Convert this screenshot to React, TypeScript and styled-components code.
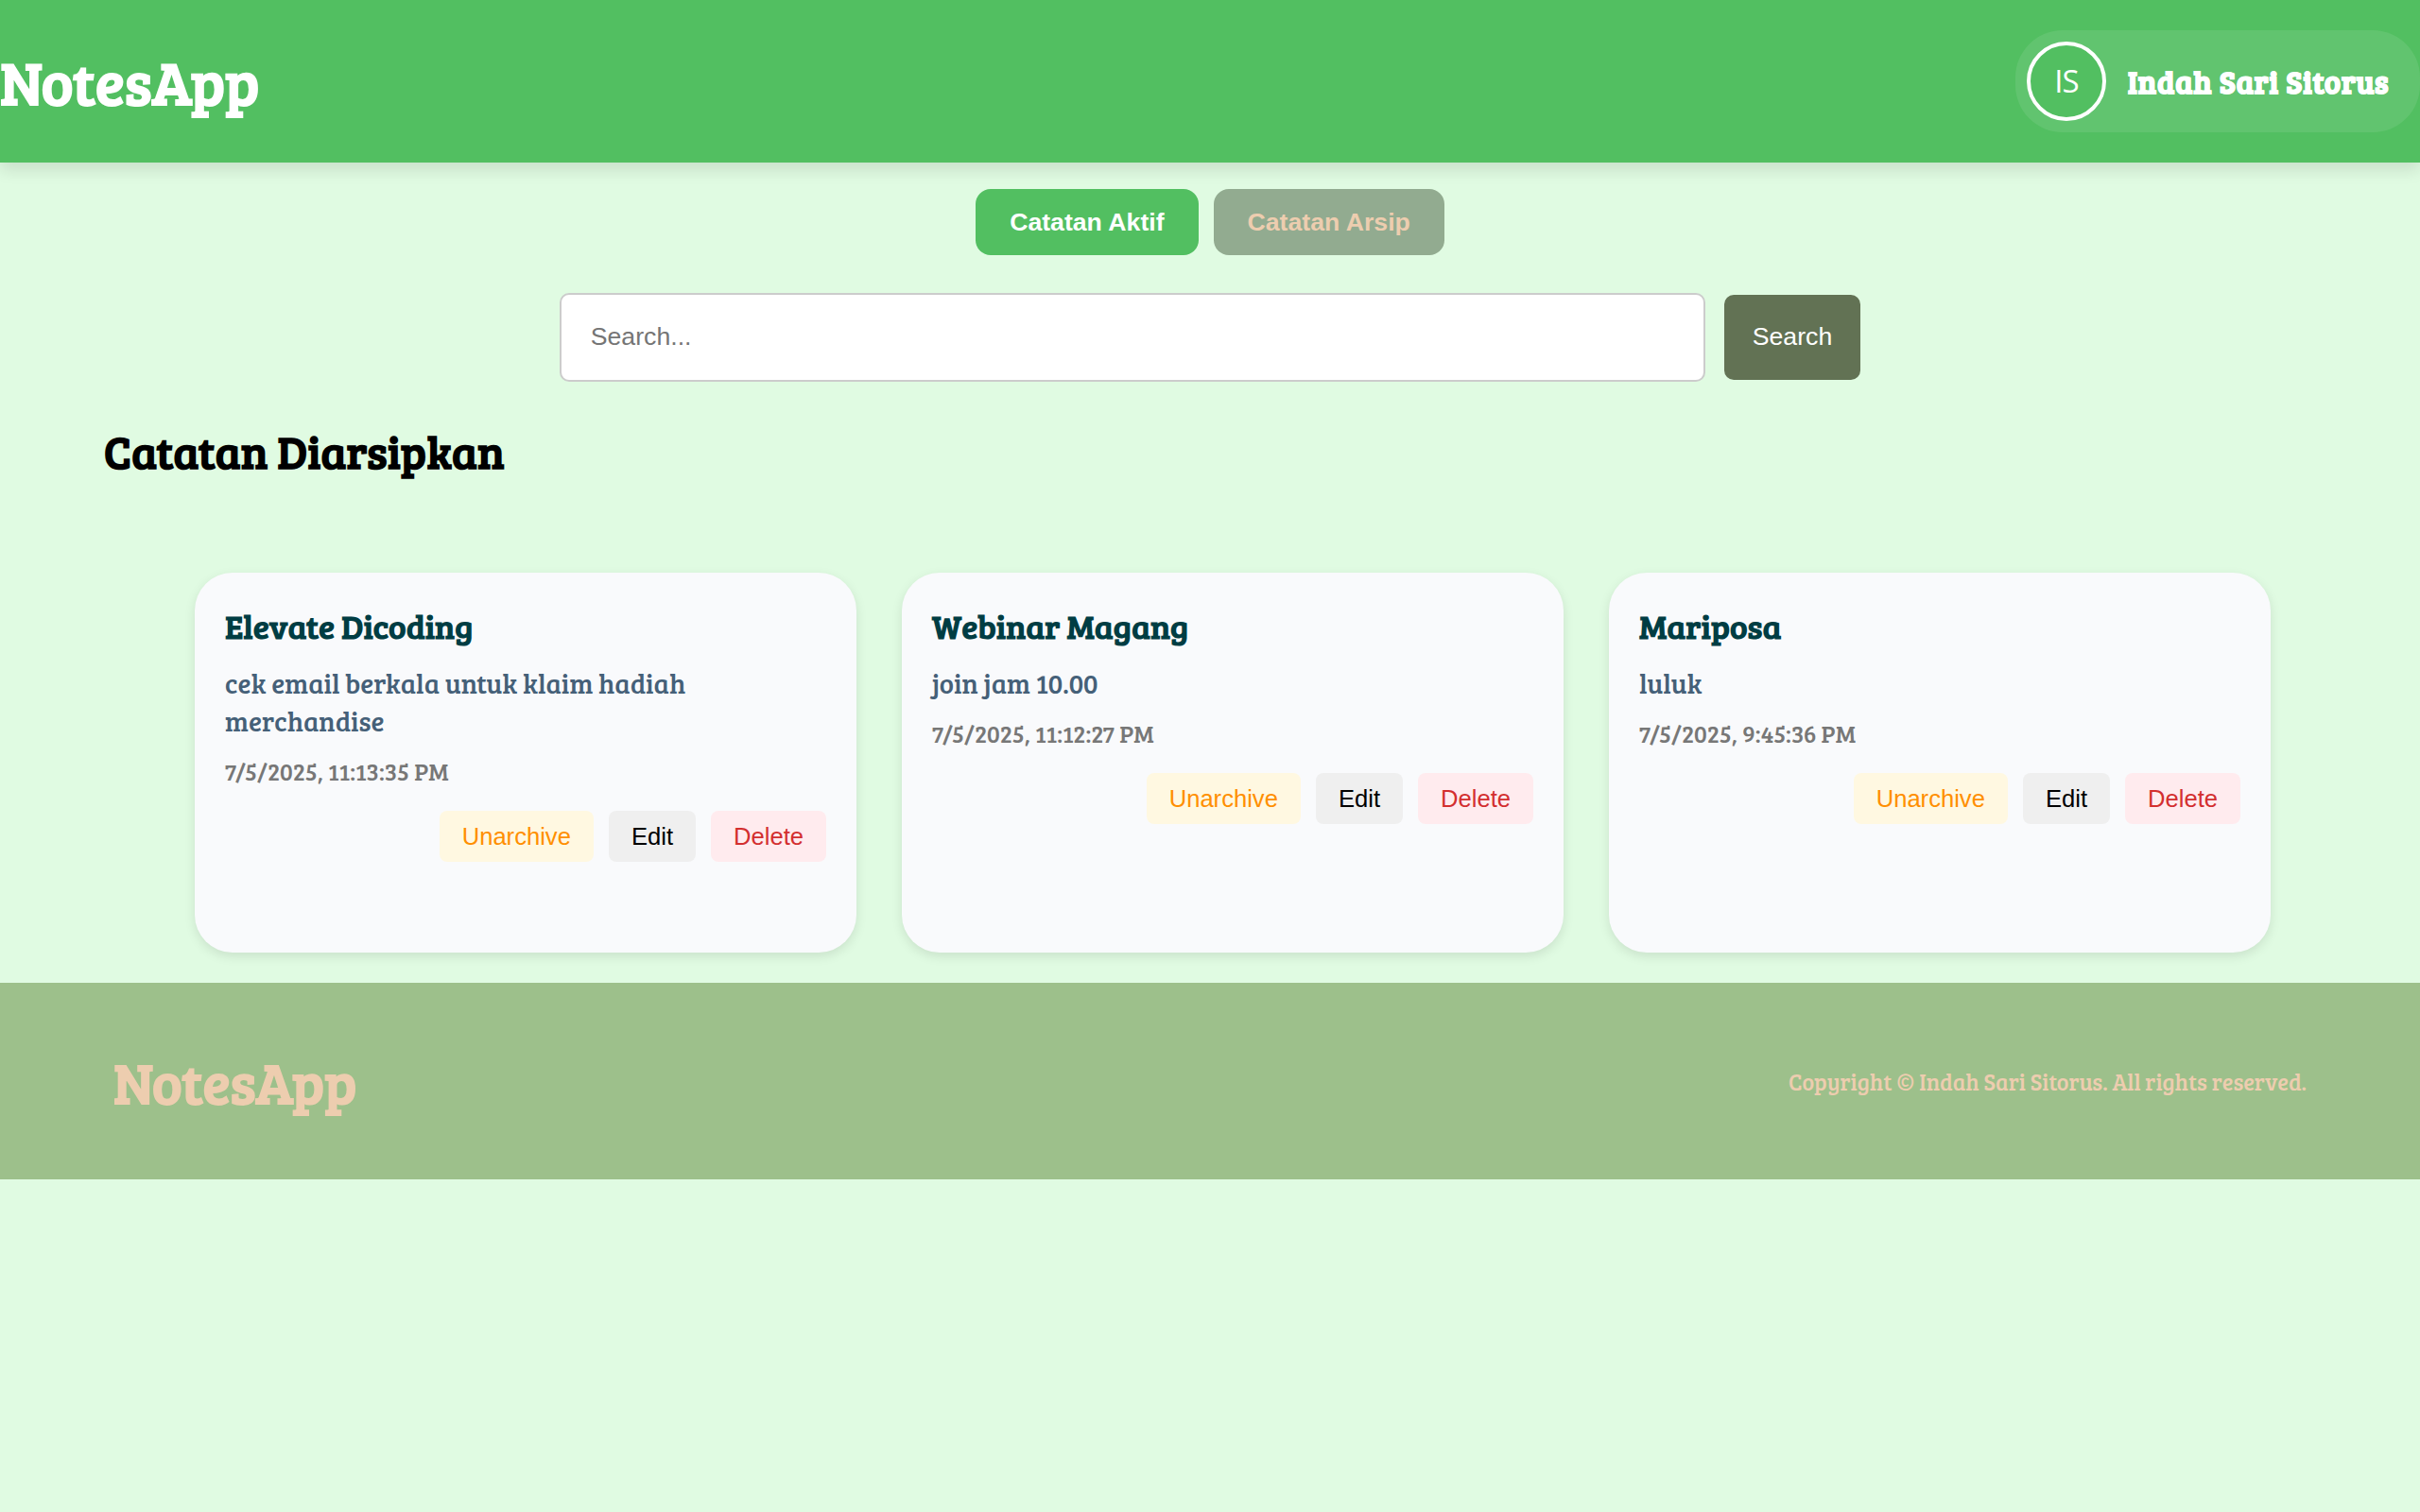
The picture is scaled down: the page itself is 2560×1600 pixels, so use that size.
import React from "react";
import styled, { createGlobalStyle } from "styled-components";

const slab = `"Bree Serif", "DejaVu Serif Condensed", "DejaVu Serif", serif`;
const sans = `Arial, "Liberation Sans", sans-serif`;

const GlobalStyle = createGlobalStyle`
  *, *::before, *::after { box-sizing: border-box; }
  body {
    margin: 0;
    min-height: 100vh;
    background: #e0fbe2;
    font-family: ${slab};
    color: #000;
  }
  h1, h2, h3, p { margin: 0; }
  button, input { font-family: ${sans}; }
`;

const Header = styled.header`
  display: flex;
  align-items: center;
  justify-content: space-between;
  height: 172px;
  background: #52bf61;
  color: #fff;
  box-shadow: 0 8px 16px rgba(0, 0, 0, 0.11);
`;

const Logo = styled.h1`
  font-size: 64px;
  line-height: 80px;
  white-space: nowrap;
`;

const Profile = styled.div`
  display: flex;
  align-items: center;
  gap: 23px;
  width: 428px;
  height: 108px;
  padding: 12px;
  border-radius: 50px;
  background: rgba(255, 255, 255, 0.09);
`;

const Avatar = styled.div`
  display: flex;
  align-items: center;
  justify-content: center;
  flex: none;
  width: 84px;
  height: 84px;
  padding-bottom: 1px;
  border: 4px solid #fff;
  border-radius: 50%;
  background: #52bf61;
  font: 400 33px "Open Sans", sans-serif;
  letter-spacing: -1px;
`;

const ProfileName = styled.span`
  padding-top: 2px;
  font-size: 32px;
  font-weight: bold;
  line-height: 40px;
  letter-spacing: 1px;
  white-space: nowrap;
  -webkit-text-stroke: 0.9px currentColor;
`;

const Tabs = styled.nav`
  display: flex;
  justify-content: center;
  gap: 16px;
  padding-top: 28px;
`;

const Tab = styled.button<{ $active?: boolean }>`
  height: 70px;
  padding: 0 36px;
  border: 0;
  border-radius: 16px;
  background: ${(p) => (p.$active ? "#52bf61" : "#92ab90")};
  color: ${(p) => (p.$active ? "#fff" : "#edcdaf")};
  font-size: 26.67px;
  font-weight: bold;
`;

const SearchForm = styled.form`
  display: flex;
  align-items: center;
  justify-content: center;
  gap: 20px;
  padding-top: 40px;
`;

const SearchInput = styled.input`
  width: 1212px;
  height: 94px;
  padding: 0 30px 2px 31px;
  border: 2px solid #ccc;
  border-radius: 10px;
  background: #fff;
  font-size: 26.67px;
  &::placeholder { color: #757575; }
`;

const SearchButton = styled.button`
  height: 90px;
  padding: 0 30px 1px;
  border: 0;
  border-radius: 10px;
  background: #627254;
  color: #fff;
  font-size: 26.67px;
`;

const SectionTitle = styled.h2`
  margin: 43px 0 99px 110px;
  font-size: 48px;
  line-height: 60px;
`;

const NotesGrid = styled.section`
  display: grid;
  grid-template-columns: repeat(3, 700px);
  gap: 48px;
  padding: 0 158px 32px 206px;
`;

const Card = styled.article`
  height: 402px;
  padding: 29px 32px 32px;
  border-radius: 40px;
  background: #f9fafc;
  box-shadow: 0 4px 12px rgba(0, 0, 0, 0.1);
`;

const NoteTitle = styled.h3`
  color: #003d43;
  font-size: 35.2px;
  line-height: 54px;
`;

const NoteBody = styled.p`
  margin-top: 14px;
  color: #456078;
  font-size: 28.8px;
  line-height: 40px;
`;

const NoteDate = styled.p`
  margin-top: 17px;
  color: #777;
  font-size: 25.6px;
  line-height: 32px;
`;

const Actions = styled.div`
  display: flex;
  justify-content: flex-end;
  gap: 16px;
  margin-top: 26px;
`;

const palette = {
  unarchive: ["#fff8e1", "#ff8f00"],
  edit: ["#efefef", "#000"],
  delete: ["#ffebee", "#d32f2f"],
} as const;

const ActionButton = styled.button<{ $kind: keyof typeof palette }>`
  height: 54px;
  padding: 0 24px;
  border: 0;
  border-radius: 8px;
  background: ${(p) => palette[p.$kind][0]};
  color: ${(p) => palette[p.$kind][1]};
  font-size: 25.6px;
`;

const Footer = styled.footer`
  display: flex;
  align-items: center;
  justify-content: space-between;
  height: 208px;
  padding: 0 120px;
  background: #9dc08b;
  color: #edcdaf;
`;

const FooterLogo = styled(Logo)`
  font-size: 60px;
`;

const Copyright = styled.p`
  padding-top: 2px;
  font-size: 24px;
  line-height: 32px;
`;

type Note = { title: string; body: string; date: string };

const notes: Note[] = [
  {
    title: "Elevate Dicoding",
    body: "cek email berkala untuk klaim hadiah merchandise",
    date: "7/5/2025, 11:13:35 PM",
  },
  { title: "Webinar Magang", body: "join jam 10.00", date: "7/5/2025, 11:12:27 PM" },
  { title: "Mariposa", body: "luluk", date: "7/5/2025, 9:45:36 PM" },
];

function NoteCard({ note }: { note: Note }) {
  return (
    <Card>
      <NoteTitle>{note.title}</NoteTitle>
      <NoteBody>{note.body}</NoteBody>
      <NoteDate>{note.date}</NoteDate>
      <Actions>
        <ActionButton $kind="unarchive">Unarchive</ActionButton>
        <ActionButton $kind="edit">Edit</ActionButton>
        <ActionButton $kind="delete">Delete</ActionButton>
      </Actions>
    </Card>
  );
}

export default function App() {
  return (
    <>
      <GlobalStyle />
      <Header>
        <Logo>NotesApp</Logo>
        <Profile>
          <Avatar>IS</Avatar>
          <ProfileName>Indah Sari Sitorus</ProfileName>
        </Profile>
      </Header>
      <main>
        <Tabs>
          <Tab $active>Catatan Aktif</Tab>
          <Tab>Catatan Arsip</Tab>
        </Tabs>
        <SearchForm onSubmit={(e) => e.preventDefault()}>
          <SearchInput type="text" placeholder="Search..." />
          <SearchButton type="submit">Search</SearchButton>
        </SearchForm>
        <SectionTitle>Catatan Diarsipkan</SectionTitle>
        <NotesGrid>
          {notes.map((note) => (
            <NoteCard key={note.title} note={note} />
          ))}
        </NotesGrid>
      </main>
      <Footer>
        <FooterLogo>NotesApp</FooterLogo>
        <Copyright>Copyright © Indah Sari Sitorus. All rights reserved.</Copyright>
      </Footer>
    </>
  );
}
